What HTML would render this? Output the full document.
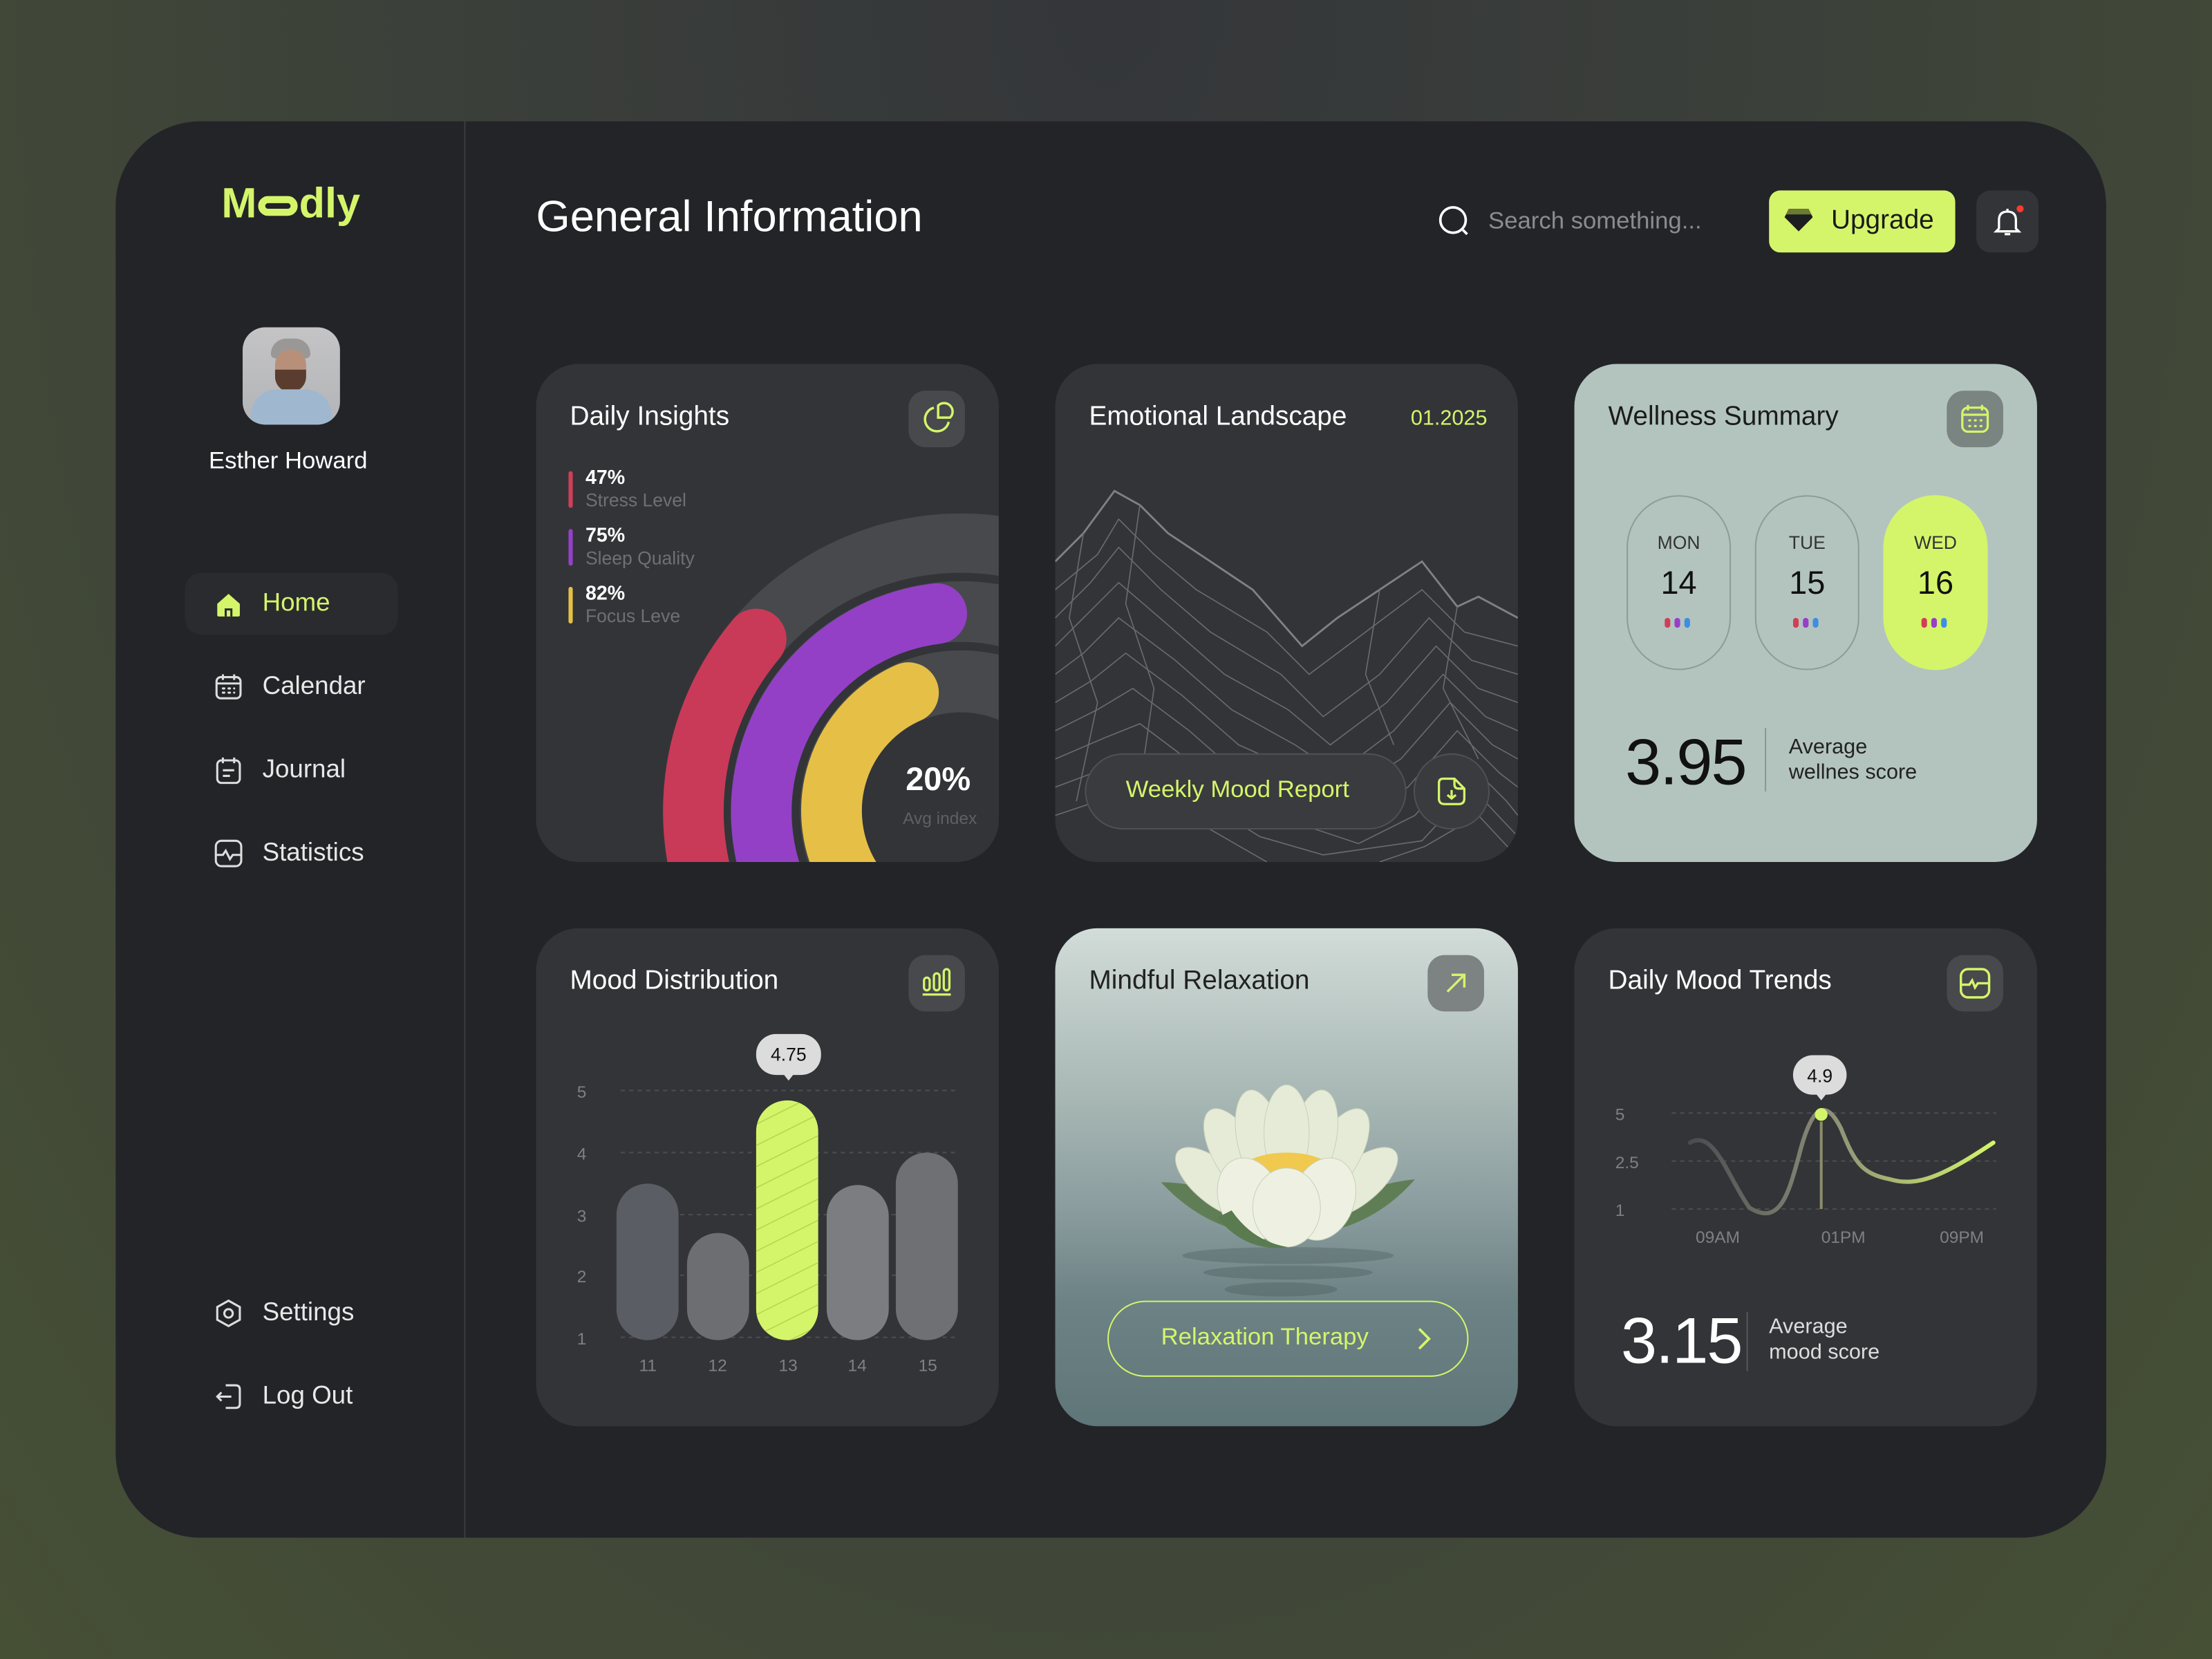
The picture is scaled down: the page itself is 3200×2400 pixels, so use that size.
<!DOCTYPE html>
<html><head><meta charset="utf-8"><style>
*{margin:0;padding:0;box-sizing:border-box}
html,body{width:3200px;height:2400px;overflow:hidden}
body{background:radial-gradient(ellipse at 50% 0%,#34363a 0%,#3b3f3a 40%,#465035 100%);font-family:"Liberation Sans",sans-serif}
#s{position:absolute;left:0;top:0;width:1568px;height:1176px;transform:scale(2.040816);transform-origin:0 0}
.a{position:absolute}
.panel{left:82px;top:86px;width:1411px;height:1004px;background:#232428;border-radius:60px;overflow:hidden}
.card{position:absolute;width:328px;height:353px;border-radius:30px;background:#333438;overflow:hidden}
.t{position:absolute;left:24px;top:27px;font-size:19px;color:#fff}
.ib{position:absolute;right:24px;top:19px;width:40px;height:40px;border-radius:12px;background:#48494d}
.nav{position:absolute;left:186px;font-size:18px;color:#e8e8e8}
.ni{position:absolute;left:151px}
</style></head><body><div id="s">
<div class="a panel"></div>
<div class="a" style="left:329px;top:86px;width:1px;height:1004px;background:#3a3b3f"></div>
<div class="a" style="left:157px;top:128px;font-size:30px;font-weight:bold;color:#d4f56a;letter-spacing:0px">M<span style="display:inline-block;width:28px;height:14px;border:5px solid #d4f56a;border-radius:8px;vertical-align:1px;margin:0 1px"></span>dly</div>
<div class="a" style="left:172px;top:232px;width:69px;height:69px;border-radius:16px;background:linear-gradient(#c4c4c6,#b3b4b7);overflow:hidden">
<div class="a" style="left:20px;top:8px;width:28px;height:14px;border-radius:14px 14px 4px 4px;background:#9a9897"></div>
<div class="a" style="left:23px;top:16px;width:22px;height:28px;border-radius:10px;background:#b8907a"></div>
<div class="a" style="left:23px;top:30px;width:22px;height:16px;border-radius:0 0 11px 11px;background:#5a3d2e"></div>
<div class="a" style="left:6px;top:44px;width:57px;height:30px;border-radius:18px 18px 0 0;background:#9fb8d0"></div></div>
<div class="a" style="left:148px;top:317px;font-size:17px;color:#fff">Esther Howard</div>
<div class="a" style="left:131px;top:406px;width:151px;height:44px;border-radius:12px;background:#2a2b2f"></div>
<svg class="ni" style="top:418px" width="22" height="22" viewBox="0 0 22 22"><path d="M3 10L11 3L19 10V18Q19 19 18 19H4Q3 19 3 18Z" fill="#d4f56a"/><path d="M9 19V14H13V19" stroke="#2a2b2f" stroke-width="1.5" fill="none"/></svg>
<div class="nav" style="top:417px;color:#d4f56a">Home</div>
<svg class="ni" style="top:476px" width="22" height="22" viewBox="0 0 22 22" fill="none" stroke="#ddd" stroke-width="1.5"><rect x="2.5" y="4" width="17" height="15" rx="3"/><path d="M7 2V6M15 2V6M2.5 8.5H19.5"/><path d="M7 12h1M11 12h1M15 12h0M7 15h1M11 15h1M15 15h0" stroke-linecap="round"/></svg>
<div class="nav" style="top:476px">Calendar</div>
<svg class="ni" style="top:535px" width="22" height="22" viewBox="0 0 22 22" fill="none" stroke="#ddd" stroke-width="1.5"><rect x="3" y="4" width="16" height="16" rx="3"/><path d="M7 2V6M15 2V6M7 11H15M7 15H12"/></svg>
<div class="nav" style="top:535px">Journal</div>
<svg class="ni" style="top:594px" width="22" height="22" viewBox="0 0 22 22" fill="none" stroke="#ddd" stroke-width="1.5"><rect x="2" y="2" width="18" height="18" rx="4"/><path d="M2 12H7L9 9L12 15L14 12H20"/></svg>
<div class="nav" style="top:594px">Statistics</div>
<svg class="ni" style="top:920px" width="22" height="22" viewBox="0 0 22 22" fill="none" stroke="#ddd" stroke-width="1.5"><path d="M11 2L19 6.5V15.5L11 20L3 15.5V6.5Z"/><circle cx="11" cy="11" r="3"/></svg>
<div class="nav" style="top:920px">Settings</div>
<svg class="ni" style="top:979px" width="22" height="22" viewBox="0 0 22 22" fill="none" stroke="#ddd" stroke-width="1.5"><path d="M9 3H16Q19 3 19 6V16Q19 19 16 19H9M13 11H3M6 8L3 11L6 14"/></svg>
<div class="nav" style="top:979px">Log Out</div>

<div class="a" style="left:380px;top:136px;font-size:31px;color:#fff">General Information</div>
<svg class="a" style="left:1019px;top:145px" width="24" height="24" viewBox="0 0 24 24" fill="none" stroke="#fff" stroke-width="1.8"><circle cx="11" cy="11" r="9"/><path d="M18 18L21 21"/></svg>
<div class="a" style="left:1055px;top:147px;font-size:17px;color:#8b8c90">Search something...</div>
<div class="a" style="left:1254px;top:135px;width:132px;height:44px;border-radius:8px;background:#d4f56a"></div>
<svg class="a" style="left:1264px;top:146px" width="22" height="20" viewBox="0 0 22 20"><path d="M4 2H18L21 8L11 18L1 8Z" fill="#1d1e1f"/><path d="M4 2H18L20 6H2Z" fill="#6b7a35"/></svg>
<div class="a" style="left:1298px;top:146px;font-size:19px;color:#1a1a1a">Upgrade</div>
<div class="a" style="left:1401px;top:135px;width:44px;height:44px;border-radius:10px;background:#333438"></div>
<svg class="a" style="left:1411px;top:145px" width="24" height="24" viewBox="0 0 24 24" fill="none" stroke="#fff" stroke-width="1.6"><path d="M6 17V11Q6 5 12 5Q18 5 18 11V17L20 19H4Z"/><path d="M10 21H14M12 3V5"/><circle cx="21" cy="3" r="2.5" fill="#ff3b30" stroke="none"/></svg>

<!-- Daily insights -->
<div class="card" style="left:380px;top:258px">
<div class="t">Daily Insights</div>
<div class="ib"><svg width="40" height="40" viewBox="0 0 40 40" fill="none" stroke="#d4f56a" stroke-width="1.7"><path d="M18 12A8.5 8.5 0 1 0 28.5 22"/><path d="M21 10.5A6 6 0 0 1 29.5 19H21Z"/></svg></div>
<div class="a" style="left:23px;top:76px;width:3px;height:26px;border-radius:2px;background:#d13e58"></div>
<div class="a" style="left:35px;top:72px;font-size:14px;font-weight:bold;color:#fff">47%</div>
<div class="a" style="left:35px;top:89px;font-size:13px;color:#6f7074">Stress Level</div>
<div class="a" style="left:23px;top:117px;width:3px;height:26px;border-radius:2px;background:#9540c8"></div>
<div class="a" style="left:35px;top:113px;font-size:14px;font-weight:bold;color:#fff">75%</div>
<div class="a" style="left:35px;top:130px;font-size:13px;color:#6f7074">Sleep Quality</div>
<div class="a" style="left:23px;top:158px;width:3px;height:26px;border-radius:2px;background:#e6c044"></div>
<div class="a" style="left:35px;top:154px;font-size:14px;font-weight:bold;color:#fff">82%</div>
<div class="a" style="left:35px;top:171px;font-size:13px;color:#6f7074">Focus Leve</div>
<svg class="a" style="left:0;top:0" width="328" height="353" viewBox="380 258 328 353">
<circle cx="681" cy="575" r="140.5" fill="none" stroke="#48494d" stroke-width="141"/>
<circle cx="681" cy="575" r="117" fill="none" stroke="#333438" stroke-width="6"/>
<circle cx="681" cy="575" r="166" fill="none" stroke="#333438" stroke-width="6"/>
<circle cx="681" cy="575" r="70" fill="#333438"/>
<path d="M517 670 A189.5 189.5 0 0 1 536 453" fill="none" stroke="#c93a58" stroke-width="43" stroke-linecap="round"/>
<path d="M558.5 646 A141.5 141.5 0 0 1 664 435" fill="none" stroke="#9340c6" stroke-width="43" stroke-linecap="round"/>
<path d="M602 621 A91.5 91.5 0 0 1 644 491" fill="none" stroke="#e6c046" stroke-width="43" stroke-linecap="round"/>
</svg>
<div class="a" style="left:262px;top:281px;font-size:23px;font-weight:bold;color:#fff">20%</div>
<div class="a" style="left:260px;top:315px;font-size:12px;color:#5f6064">Avg index</div>
</div>

<!-- Emotional landscape -->
<div class="card" style="left:748px;top:258px">
<div class="t">Emotional Landscape</div>
<div class="a" style="left:252px;top:30px;font-size:15px;color:#d4f56a">01.2025</div>
<svg class="a" style="left:0;top:80px" width="328" height="273" viewBox="0 0 328 273" fill="none" stroke="#6a6b6e" stroke-width="0.8">
<path d="M0 60L20 40L42 10L60 20L80 40L110 60L140 80L175 120L200 100L230 80L260 60L285 92L300 85L328 100" stroke="#808184" stroke-width="1.4"/>
<path d="M0 80L30 55L45 30L70 55L100 80L150 110L180 140L220 110L260 80L290 110L328 120"/>
<path d="M0 100L25 75L45 50L75 80L110 110L160 140L190 170L230 140L265 100L295 130L328 140"/>
<path d="M0 120L20 100L45 75L80 105L120 140L165 165L195 190L235 160L270 120L300 150L328 160"/>
<path d="M0 140L20 125L45 100L85 130L125 165L170 190L200 210L240 180L275 140L305 170L328 180"/>
<path d="M0 160L25 145L50 125L90 155L130 190L175 210L205 225L245 200L280 160L310 190L328 200"/>
<path d="M0 180L30 165L55 150L95 180L135 215L180 230L210 245L250 220L285 180L315 210L328 220"/>
<path d="M0 200L35 185L60 175L100 205L140 235L185 250L215 260L255 240L290 200L320 230L328 240"/>
<path d="M0 220L40 205L65 200L105 230L145 255L190 268L260 258L295 220L328 255"/>
<path d="M0 240L45 225L70 225L110 250L150 273M230 273L262 262L300 240L328 270"/>
<path d="M20 40L10 100L30 160L15 230M60 20L50 90L70 150L60 220M230 80L220 140L240 190M285 92L275 150L300 200"/>
</svg>
<div class="a" style="left:21px;top:276px;width:228px;height:54px;border-radius:27px;background:#3a3b3e;border:1px solid #4f5052"></div>
<div class="a" style="left:50px;top:292px;font-size:17px;color:#d4f56a">Weekly Mood Report</div>
<div class="a" style="left:254px;top:276px;width:54px;height:54px;border-radius:27px;background:#3a3b3e;border:1px solid #4f5052"></div>
<svg class="a" style="left:269px;top:291px" width="24" height="24" viewBox="0 0 24 24" fill="none" stroke="#d4f56a" stroke-width="1.6"><path d="M6 3H14L21 10V17Q21 21 17 21H7Q3 21 3 17V6Q3 3 6 3Z"/><path d="M14 3V7Q14 10 17 10H21M12 11V17M9 14.5L12 17L15 14.5"/></svg>
</div>

<!-- Wellness -->
<div class="card" style="left:1116px;top:258px;background:#b3c4bf">
<div class="t" style="color:#1b1b1b">Wellness Summary</div>
<div class="ib" style="background:#7a8481"><svg width="40" height="40" viewBox="0 0 40 40" fill="none" stroke="#d4f56a" stroke-width="1.6"><rect x="11" y="12" width="18" height="17" rx="4"/><path d="M15 10V14M25 10V14M11 17H29"/><path d="M16 21h.5M20 21h.5M24 21h.5M16 25h.5M20 25h.5M24 25h.5" stroke-linecap="round"/></svg></div>
<div class="a" style="left:37px;top:93px;width:74px;height:124px;border-radius:37px;border:1px solid #8d9c98"></div>
<div class="a" style="left:128px;top:93px;width:74px;height:124px;border-radius:37px;border:1px solid #8d9c98"></div>
<div class="a" style="left:219px;top:93px;width:74px;height:124px;border-radius:37px;background:#d4f56a"></div>
<div class="a" style="left:37px;top:119px;width:74px;text-align:center;font-size:13px;color:#333">MON</div>
<div class="a" style="left:128px;top:119px;width:74px;text-align:center;font-size:13px;color:#333">TUE</div>
<div class="a" style="left:219px;top:119px;width:74px;text-align:center;font-size:13px;color:#333">WED</div>
<div class="a" style="left:37px;top:142px;width:74px;text-align:center;font-size:23px;color:#111">14</div>
<div class="a" style="left:128px;top:142px;width:74px;text-align:center;font-size:23px;color:#111">15</div>
<div class="a" style="left:219px;top:142px;width:74px;text-align:center;font-size:23px;color:#111">16</div>
<svg class="a" style="left:64px;top:180px" width="20" height="8"><rect x="0" y="0" width="4" height="7" rx="2" fill="#d13e58"/><rect x="7" y="0" width="4" height="7" rx="2" fill="#9540c8"/><rect x="14" y="0" width="4" height="7" rx="2" fill="#3f8ee0"/></svg>
<svg class="a" style="left:155px;top:180px" width="20" height="8"><rect x="0" y="0" width="4" height="7" rx="2" fill="#d13e58"/><rect x="7" y="0" width="4" height="7" rx="2" fill="#9540c8"/><rect x="14" y="0" width="4" height="7" rx="2" fill="#3f8ee0"/></svg>
<svg class="a" style="left:246px;top:180px" width="20" height="8"><rect x="0" y="0" width="4" height="7" rx="2" fill="#d13e58"/><rect x="7" y="0" width="4" height="7" rx="2" fill="#9540c8"/><rect x="14" y="0" width="4" height="7" rx="2" fill="#3f8ee0"/></svg>
<div class="a" style="left:36px;top:255px;font-size:46px;color:#111;letter-spacing:-1px">3.95</div>
<div class="a" style="left:135px;top:258px;width:1px;height:45px;background:#8a9894"></div>
<div class="a" style="left:152px;top:263px;font-size:15px;color:#222;line-height:18px">Average<br>wellnes score</div>
</div>

<!-- Mood distribution -->
<div class="card" style="left:380px;top:658px">
<div class="t">Mood Distribution</div>
<div class="ib"><svg width="40" height="40" viewBox="0 0 40 40" fill="none" stroke="#d4f56a" stroke-width="1.6"><rect x="11" y="16" width="4" height="9" rx="2"/><rect x="18" y="13" width="4" height="12" rx="2"/><rect x="25" y="10" width="4" height="15" rx="2"/><path d="M10 28H30"/></svg></div>
<svg class="a" style="left:0;top:0" width="328" height="353" viewBox="380 658 328 353">
<g stroke="#4c4d51" stroke-dasharray="3 3" stroke-width="1"><path d="M440 773H680M440 817H680M440 861H680M440 904H680M440 948H680"/></g>
<g font-family="Liberation Sans" font-size="12" fill="#7f8084"><text x="409" y="778">5</text><text x="409" y="822">4</text><text x="409" y="866">3</text><text x="409" y="909">2</text><text x="409" y="953">1</text>
<text x="453" y="972">11</text><text x="502" y="972">12</text><text x="552" y="972">13</text><text x="601" y="972">14</text><text x="651" y="972">15</text></g>
<rect x="437" y="839" width="44" height="111" rx="22" fill="#5a5d63"/>
<rect x="487" y="874" width="44" height="76" rx="22" fill="#6d6e72"/>
<rect x="586" y="840" width="44" height="110" rx="22" fill="#7c7d81"/>
<rect x="635" y="817" width="44" height="133" rx="22" fill="#6f7074"/>
<clipPath id="bc"><rect x="536" y="780" width="44" height="170" rx="22"/></clipPath>
<rect x="536" y="780" width="44" height="170" rx="22" fill="#d4f56a"/>
<g clip-path="url(#bc)" stroke="#b8d552" stroke-width="0.8"><path d="M530 800L590 770M530 815L590 785M530 830L590 800M530 845L590 815M530 860L590 830M530 875L590 845M530 890L590 860M530 905L590 875M530 920L590 890M530 935L590 905M530 950L590 920M530 965L590 935"/></g>
<rect x="536" y="733" width="46" height="29" rx="14" fill="#dcdcdc"/><path d="M555 761L559 766L563 761Z" fill="#dcdcdc"/>
<text x="559" y="752" text-anchor="middle" font-family="Liberation Sans" font-size="13" fill="#111">4.75</text>
</svg>
</div>

<!-- Mindful relaxation -->
<div class="card" style="left:748px;top:658px;background:linear-gradient(180deg,#d2dcd8 0%,#a6b6b3 35%,#8c9ea0 55%,#6d8285 75%,#5f7679 100%)">
<div class="t" style="color:#222">Mindful Relaxation</div>
<div class="ib" style="background:#7d8282"><svg width="40" height="40" viewBox="0 0 40 40" fill="none" stroke="#d4f56a" stroke-width="1.7"><path d="M14 26L26 14M17 14H26V23"/></svg></div>
<svg class="a" style="left:0;top:0" width="328" height="353">
<g fill="#3f5152" opacity="0.3"><ellipse cx="165" cy="232" rx="75" ry="6"/><ellipse cx="165" cy="244" rx="60" ry="5"/><ellipse cx="160" cy="256" rx="40" ry="5"/></g>
<path d="M75 180Q120 180 160 218Q110 218 75 180Z" fill="#5f7e55"/>
<path d="M255 178Q210 182 165 218Q220 218 255 178Z" fill="#5f7e55"/>
<g fill="#e6ebd8" stroke="#c8d0b8" stroke-width="0.5">
<ellipse cx="113" cy="180" rx="15" ry="34" transform="rotate(-50 113 180)"/>
<ellipse cx="215" cy="180" rx="15" ry="34" transform="rotate(50 215 180)"/>
<ellipse cx="128" cy="160" rx="16" ry="36" transform="rotate(-30 128 160)"/>
<ellipse cx="200" cy="160" rx="16" ry="36" transform="rotate(30 200 160)"/>
<ellipse cx="145" cy="150" rx="16" ry="36" transform="rotate(-12 145 150)"/>
<ellipse cx="183" cy="150" rx="16" ry="36" transform="rotate(12 183 150)"/>
<ellipse cx="164" cy="145" rx="16" ry="34"/></g>
<g fill="#f0c94e"><ellipse cx="164" cy="172" rx="32" ry="13"/></g>
<g fill="#eef1e2" stroke="#c8d0b8" stroke-width="0.5">
<ellipse cx="138" cy="192" rx="22" ry="30" transform="rotate(-20 138 192)"/>
<ellipse cx="190" cy="192" rx="22" ry="30" transform="rotate(20 190 192)"/>
<ellipse cx="164" cy="198" rx="24" ry="28"/></g>
<path d="M115 205Q135 230 165 226Q140 222 125 200Z" fill="#5a7a50"/>
</svg>
<div class="a" style="left:37px;top:264px;width:256px;height:54px;border-radius:27px;border:1.5px solid #d4f56a"></div>
<div class="a" style="left:75px;top:280px;font-size:17px;color:#d4f56a">Relaxation Therapy</div>
<svg class="a" style="left:253px;top:281px" width="16" height="20" viewBox="0 0 16 20" fill="none" stroke="#d4f56a" stroke-width="1.8"><path d="M5 3L12 10L5 17"/></svg>
</div>

<!-- Daily mood trends -->
<div class="card" style="left:1116px;top:658px">
<div class="t">Daily Mood Trends</div>
<div class="ib"><svg width="40" height="40" viewBox="0 0 40 40" fill="none" stroke="#d4f56a" stroke-width="1.7"><rect x="10" y="10" width="20" height="20" rx="5"/><path d="M10 21H16L18 18L20 23L22 20H30"/></svg></div>
<svg class="a" style="left:0;top:0" width="328" height="353" viewBox="1116 658 328 353">
<defs><linearGradient id="lg" x1="0" x2="1"><stop offset="0" stop-color="#4a4b4f"/><stop offset="0.45" stop-color="#8a8c78"/><stop offset="1" stop-color="#d4f56a"/></linearGradient></defs>
<g stroke="#4c4d51" stroke-dasharray="3 3"><path d="M1185 789H1415M1185 823H1415M1185 857H1415"/></g>
<g font-family="Liberation Sans" font-size="12" fill="#7f8084"><text x="1145" y="794">5</text><text x="1145" y="828">2.5</text><text x="1145" y="862">1</text>
<text x="1202" y="881">09AM</text><text x="1291" y="881">01PM</text><text x="1375" y="881">09PM</text></g>
<path d="M1198 810C1215 800 1225 835 1240 856C1262 870 1268 845 1275 820C1285 780 1295 780 1305 800C1315 825 1320 832 1340 836C1360 842 1380 832 1413 810" fill="none" stroke="url(#lg)" stroke-width="3" stroke-linecap="round"/>
<path d="M1291 795V857" stroke="#8a8c6a" stroke-width="2"/>
<circle cx="1291" cy="790" r="4.5" fill="#d4f56a"/>
<rect x="1271" y="748" width="38" height="28" rx="14" fill="#dcdcdc"/><path d="M1287 775L1291 780L1295 775Z" fill="#dcdcdc"/>
<text x="1290" y="767" text-anchor="middle" font-family="Liberation Sans" font-size="13" fill="#111">4.9</text>
</svg>
<div class="a" style="left:33px;top:265px;font-size:46px;color:#fff;letter-spacing:-1px">3.15</div>
<div class="a" style="left:122px;top:272px;width:1px;height:42px;background:#55565a"></div>
<div class="a" style="left:138px;top:274px;font-size:15px;color:#ddd;line-height:18px">Average<br>mood score</div>
</div>
</div></body></html>
